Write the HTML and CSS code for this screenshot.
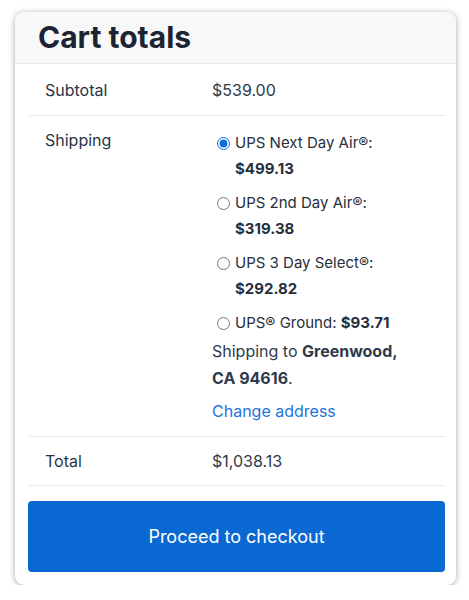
FILE: index.html
```html
<!DOCTYPE html>
<html lang="en">

<head>
    <meta charset="UTF-8">
    <meta name="viewport" content="width=device-width, initial-scale=1.0">
    <title>Cart totals</title>

    <link rel="stylesheet" href="styles.css">
</head>

<body>

    <div class="cart-totals">
        <h2 class="cart-title">Cart totals</h2>

        <div class="cart-body">
            <table class="totals-table">
                <tr class="row-subtotal">
                    <th>Subtotal</th>
                    <td>$539.00</td>
                </tr>
                <tr class="row-shipping">
                    <th>Shipping</th>
                    <td>
                        <ul class="shipping-methods">
                            <li>
                                <input type="radio" name="shipping" id="ship1" checked>
                                <label for="ship1">UPS Next Day Air®: <strong>$499.13</strong></label>
                            </li>
                            <li>
                                <input type="radio" name="shipping" id="ship2">
                                <label for="ship2">UPS 2nd Day Air®: <strong>$319.38</strong></label>
                            </li>
                            <li>
                                <input type="radio" name="shipping" id="ship3">
                                <label for="ship3">UPS 3 Day Select®: <strong>$292.82</strong></label>
                            </li>
                            <li>
                                <input type="radio" name="shipping" id="ship4">
                                <label for="ship4">UPS® Ground: <strong>$93.71</strong></label>
                            </li>
                        </ul>
                        <p class="destination">Shipping to <strong>Greenwood,</strong> <strong>CA 94616</strong>.</p>
                        <a href="#" class="change-address">Change address</a>
                    </td>
                </tr>
                <tr class="row-total">
                    <th>Total</th>
                    <td>$1,038.13</td>
                </tr>
            </table>

            <button type="button" class="checkout-button">Proceed to checkout</button>
        </div>
    </div>

</body>

</html>
```

FILE: styles.css
```css
body {
    font-family: Inter, "Noto Sans", sans-serif;
    background-color: #fff;
    margin: 0;
    padding: 0;
    color: #2f3a4c;
}

.cart-totals {
    width: 441px;
    margin: 12px 0 0 15px;
    background: #fff;
    border-radius: 9px;
    box-shadow: 0 1px 6px rgba(0, 0, 0, 0.35);
    overflow: hidden;
}

.cart-title {
    margin: 0;
    padding: 7px 23px 8px;
    background-color: #f8f8f8;
    border-bottom: 1px solid #e6e6e6;
    font-size: 30px;
    font-weight: 700;
    line-height: 36px;
    color: #1c2434;
}

.cart-body {
    padding: 0 11px 13px 13px;
}

.totals-table {
    width: 100%;
    table-layout: fixed;
    border-collapse: collapse;
    font-size: 16px;
}

.totals-table th,
.totals-table td {
    text-align: left;
    vertical-align: top;
    border-bottom: 1px solid #ebebeb;
    padding: 15px 17px 14px;
    line-height: 22px;
}

.totals-table th {
    width: 150px;
    font-weight: 400;
    color: #2a3547;
}

.totals-table td {
    padding-left: 0;
    padding-right: 28px;
}

.row-total th,
.row-total td {
    padding-top: 13px;
    padding-bottom: 13px;
}

.row-shipping th {
    padding-top: 13px;
}

.row-shipping td {
    padding-top: 14px;
    padding-bottom: 11px;
}

.shipping-methods {
    list-style: none;
    margin: 0;
    padding: 0;
}

.shipping-methods li {
    display: flex;
    align-items: flex-start;
    margin-bottom: 8px;
    font-size: 15px;
    line-height: 26px;
}

.shipping-methods li:last-child {
    margin-bottom: 2px;
}

.shipping-methods input {
    margin: 7px 5px 0 5px;
    width: 13px;
    height: 13px;
    flex-shrink: 0;
    accent-color: #0b6bdb;
}

.shipping-methods label {
    color: #262f3d;
}

.shipping-methods strong {
    font-weight: 700;
}

.destination {
    margin: 0 0 6px;
    line-height: 27px;
}

.destination strong {
    font-weight: 700;
}

.change-address {
    display: block;
    color: #1e73e0;
    text-decoration: none;
    line-height: 27px;
}

.checkout-button {
    display: block;
    width: 100%;
    margin-top: 15px;
    height: 71px;
    border: none;
    border-radius: 4px;
    background-color: #0a68d2;
    color: white;
    font-family: inherit;
    font-size: 18px;
    cursor: pointer;
}
```
